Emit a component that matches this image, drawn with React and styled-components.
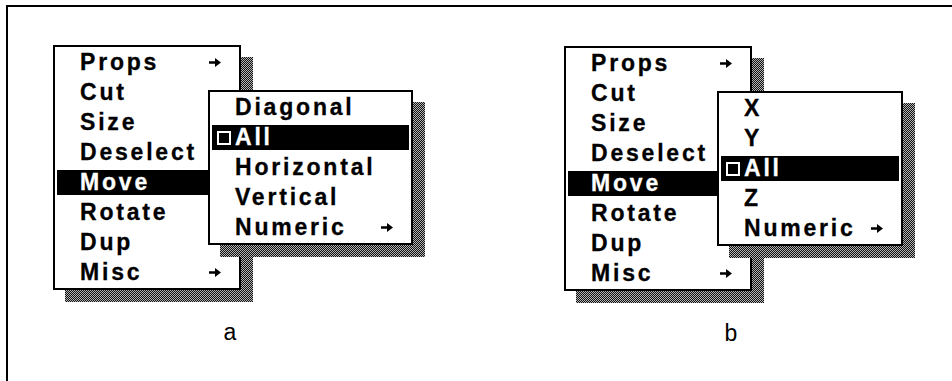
import React from "react";
import styled, { createGlobalStyle } from "styled-components";

const GlobalStyle = createGlobalStyle`
  html, body { margin: 0; padding: 0; background: #fff; }
  body { font-family: "Liberation Sans", Arial, Helvetica, sans-serif; color: #000; }
`;

const Frame = styled.div`
  box-sizing: border-box;
  margin: 5px 0 0 6px;
  height: 376px;
  border-top: 2px solid #000;
  border-left: 2px solid #000;
  display: grid;
  grid-template-columns: 511px auto;
  align-items: start;
  padding: 38px 0 0 45px;
`;

const Panel = styled.div`
  display: flex;
  flex-direction: column;
  margin-top: ${(p) => p.$dy || 0}px;
`;

const Composition = styled.div`
  position: relative;
  width: 188px;
`;

const MenuShell = styled.div`
  position: relative;
  z-index: 1;
  width: ${(p) => p.$w}px;
  &::before {
    content: "";
    position: absolute;
    left: 12px;
    top: 12px;
    width: 100%;
    height: 100%;
    background: repeating-conic-gradient(#111 0% 25%, #b4b4b4 0% 50%) 0 0 / 2px 2px;
  }
`;

const SubShell = styled(MenuShell)`
  position: absolute;
  z-index: 2;
  left: ${(p) => p.$x}px;
  top: ${(p) => p.$y}px;
`;

const MenuBox = styled.div`
  position: relative;
  box-sizing: border-box;
  background: #fff;
  border: 2px solid #000;
  padding: 3px 2px;
  display: flex;
  flex-direction: column;
  gap: 5px;
`;

const Item = styled.div`
  display: grid;
  grid-template-columns: 23px 1fr auto;
  align-items: center;
  height: 25px;
  padding-right: 16px;
  font-weight: 700;
  font-size: 23px;
  letter-spacing: 2.8px;
  line-height: 25px;
  white-space: nowrap;
  -webkit-text-stroke: 0.3px currentColor;
  background: ${(p) => (p.$active ? "#000" : "transparent")};
  color: ${(p) => (p.$active ? "#fff" : "#000")};
`;

const Check = styled.span`
  box-sizing: border-box;
  width: 14px;
  height: 14px;
  margin-left: 5px;
  border: 2px solid #fff;
`;

const Label = styled.span`
  grid-column: 2;
`;

const ArrowSvg = styled.svg`
  grid-column: 3;
  display: block;
  width: 12px;
  height: 9px;
  fill: currentColor;
`;

const Caption = styled.div`
  margin-top: 30px;
  width: ${(p) => p.$center * 2}px;
  text-align: center;
  font-size: 23px;
  line-height: 24px;
  font-weight: 400;
`;

const Arrow = () => (
  <ArrowSvg viewBox="0 0 12 9">
    <path d="M0 3.3 H6 V0 L12 4.5 L6 9 V5.7 H0 Z" />
  </ArrowSvg>
);

const Menu = ({ items }) => (
  <MenuBox>
    {items.map((it) => (
      <Item key={it.label} $active={it.active}>
        {it.check ? <Check /> : null}
        <Label>{it.label}</Label>
        {it.sub ? <Arrow /> : null}
      </Item>
    ))}
  </MenuBox>
);

const mainItems = [
  { label: "Props", sub: true },
  { label: "Cut" },
  { label: "Size" },
  { label: "Deselect" },
  { label: "Move", active: true },
  { label: "Rotate" },
  { label: "Dup" },
  { label: "Misc", sub: true },
];

const subA = [
  { label: "Diagonal" },
  { label: "All", active: true, check: true },
  { label: "Horizontal" },
  { label: "Vertical" },
  { label: "Numeric", sub: true },
];

const subB = [
  { label: "X" },
  { label: "Y" },
  { label: "All", active: true, check: true },
  { label: "Z" },
  { label: "Numeric", sub: true },
];

const panels = [
  { id: "a", sub: subA, subW: 205, subX: 155, dy: 0, center: 177 },
  { id: "b", sub: subB, subW: 186, subX: 153, dy: 1, center: 167 },
];

export default function App() {
  return (
    <>
      <GlobalStyle />
      <Frame>
        {panels.map((p) => (
          <Panel key={p.id} $dy={p.dy}>
            <Composition>
              <MenuShell $w={188}>
                <Menu items={mainItems} />
              </MenuShell>
              <SubShell $w={p.subW} $x={p.subX} $y={45}>
                <Menu items={p.sub} />
              </SubShell>
            </Composition>
            <Caption $center={p.center}>{p.id}</Caption>
          </Panel>
        ))}
      </Frame>
    </>
  );
}
